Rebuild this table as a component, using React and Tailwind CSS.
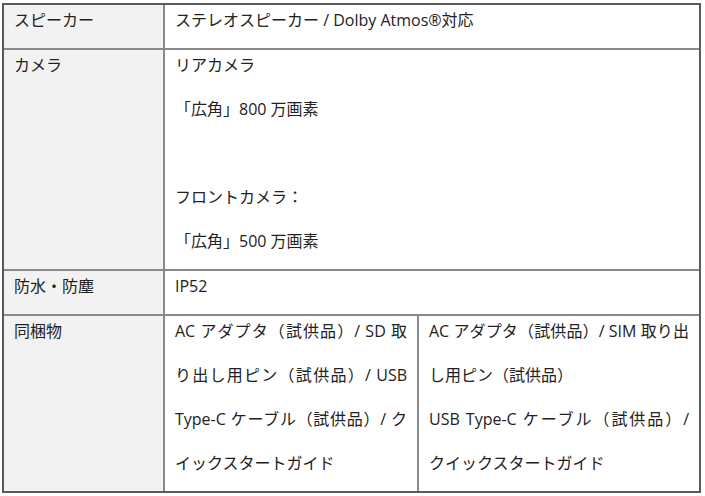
import React from "react";

const font = { fontFamily: '"Open Sans", "Noto Sans CJK JP", "Noto Sans", sans-serif' };

const Cell = ({ label, children, className = "" }) => (
  <div className={`${label ? "bg-[#f2f2f2]" : "bg-white"} ${className}`}>
    <div className="-mt-[7px] pb-[6px] px-[10px] leading-[44px]">{children}</div>
  </div>
);

const J = ({ children }) => (
  <div className="text-justify [text-align-last:justify] whitespace-nowrap">{children}</div>
);

export default function App() {
  return (
    <div className="bg-white w-[705px] h-[496px] pl-[2px] pt-[3px] text-[16px] text-[#222]" style={font}>
      <div className="w-[699px] border-2 border-[#5a5a5a] grid grid-cols-[161px_254px_1fr]">
        <Cell label className="border-r-2 border-b-2 border-[#8a8a8a]">スピーカー</Cell>
        <Cell className="col-span-2 border-b-2 border-[#8a8a8a]">ステレオスピーカー / Dolby Atmos®対応</Cell>

        <Cell label className="border-r-2 border-b-2 border-[#8a8a8a]">カメラ</Cell>
        <Cell className="col-span-2 border-b-2 border-[#8a8a8a]">
          <div>リアカメラ</div>
          <div>「広角」800 万画素</div>
          <div>&nbsp;</div>
          <div>フロントカメラ：</div>
          <div>「広角」500 万画素</div>
        </Cell>

        <Cell label className="border-r-2 border-b-2 border-[#8a8a8a]">防水・防塵</Cell>
        <Cell className="col-span-2 border-b-2 border-[#8a8a8a]">IP52</Cell>

        <Cell label className="border-r-2 border-[#8a8a8a]">同梱物</Cell>
        <Cell className="border-r-2 border-[#8a8a8a]">
          <J>AC アダプタ（試供品）/ SD 取</J>
          <J>り出し用ピン（試供品）/ USB</J>
          <J>Type-C ケーブル（試供品）/ ク</J>
          <div>イックスタートガイド</div>
        </Cell>
        <Cell>
          <J>AC アダプタ（試供品）/ SIM 取り出</J>
          <div>し用ピン（試供品）</div>
          <J>USB Type-C ケーブル（試供品）/</J>
          <div>クイックスタートガイド</div>
        </Cell>
      </div>
    </div>
  );
}
